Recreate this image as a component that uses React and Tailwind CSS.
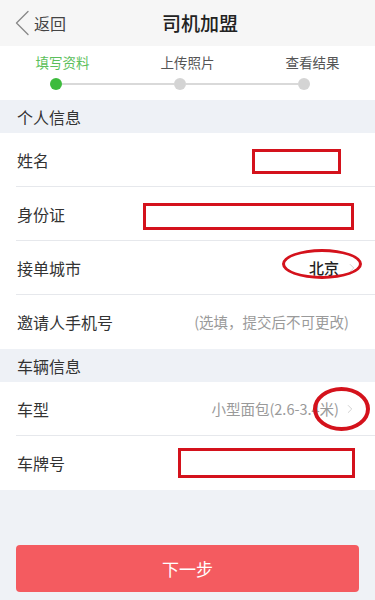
import { ChevronRight } from 'lucide-react';

const FONT = { fontFamily: '"Noto Sans CJK SC", "Noto Sans", sans-serif' };

function Row({ label, children, last }) {
  return (
    <div className="relative h-[54px] flex items-center pl-[17px] pr-[16px] bg-white">
      <span className="text-[16px] text-[#333]">{label}</span>
      <div className="flex-1 flex justify-end items-center">{children}</div>
      {!last && <div className="absolute left-[16px] right-0 bottom-0 h-px bg-[#e6e8ec]" />}
    </div>
  );
}

function Section({ title }) {
  return (
    <div className="h-[33px] flex items-center pl-[17px] bg-[#eef1f6] text-[16px] text-[#333]">
      {title}
    </div>
  );
}

export default function App() {
  return (
    <div className="relative w-[375px] h-[600px] overflow-hidden bg-[#eff2f6]" style={FONT}>
      {/* Header */}
      <header className="h-[46px] flex items-center bg-[#f6f6f6] pl-[15px]">
        <div className="flex items-center">
          <svg width="14" height="26" viewBox="0 0 14 26" fill="none">
            <path d="M13 1.5 L1.5 13 L13 24.5" stroke="#8a8a8a" strokeWidth="1.4" strokeLinecap="round" strokeLinejoin="round" />
          </svg>
          <span className="text-[16px] text-[#444] ml-[5px]">返回</span>
        </div>
        <h1 className="ml-[96px] text-[19px] font-medium text-[#222]">司机加盟</h1>
      </header>

      {/* Steps */}
      <div className="bg-white h-[54px] pt-[6px]">
        <div className="grid grid-cols-3 text-[13.5px]">
          <span className="text-center text-[#5cbf5c]">填写资料</span>
          <span className="text-center text-[#555]">上传照片</span>
          <span className="text-center text-[#555]">查看结果</span>
        </div>
        <div className="flex items-center pl-[50px] pr-[65px] mt-[6px]">
          <div className="w-[12px] h-[12px] rounded-full bg-[#3dbb3d]" />
          <div className="flex-1 h-[2px] bg-[#d9d9d9]" />
          <div className="w-[12px] h-[12px] rounded-full bg-[#d4d4d4]" />
          <div className="flex-1 h-[2px] bg-[#d9d9d9]" />
          <div className="w-[12px] h-[12px] rounded-full bg-[#d4d4d4]" />
        </div>
      </div>

      <Section title="个人信息" />
      <Row label="姓名" />
      <Row label="身份证" />
      <Row label="接单城市">
        <span className="text-[15px] font-medium text-[#222] mr-[6px]">北京</span>
        <ChevronRight className="w-[14px] h-[14px] text-[#ccc]" strokeWidth={1.5} />
      </Row>
      <Row label="邀请人手机号" last>
        <span className="text-[14.5px] text-[#9a9a9a] mr-[10px]">(选填，提交后不可更改)</span>
      </Row>

      <Section title="车辆信息" />
      <Row label="车型">
        <span className="text-[14.5px] text-[#9a9a9a] mr-[4px]">小型面包(2.6-3.4米)</span>
        <ChevronRight className="w-[14px] h-[14px] text-[#ccc] mr-[2px]" strokeWidth={1.5} />
      </Row>
      <Row label="车牌号" last />

      <div className="px-[16px] pt-[55px]">
        <button className="w-full h-[47px] rounded-[4px] bg-[#f45b60] text-white text-[17px]">下一步</button>
      </div>

      {/* Red annotation marks */}
      <div className="absolute left-[252px] top-[149px] w-[89px] h-[25px] border-[3px] border-[#d4121c] bg-white" />
      <div className="absolute left-[143px] top-[203px] w-[211px] h-[27px] border-[3px] border-[#d4121c] bg-white" />
      <div className="absolute left-[282px] top-[249px] w-[80px] h-[30px] rounded-[50%] border-[3px] border-[#d4121c]" />
      <div className="absolute left-[313px] top-[387px] w-[57px] h-[44px] rounded-[50%] border-[4px] border-[#d4121c]" />
      <div className="absolute left-[178px] top-[448px] w-[177px] h-[30px] border-[3px] border-[#d4121c] bg-white" />
    </div>
  );
}
